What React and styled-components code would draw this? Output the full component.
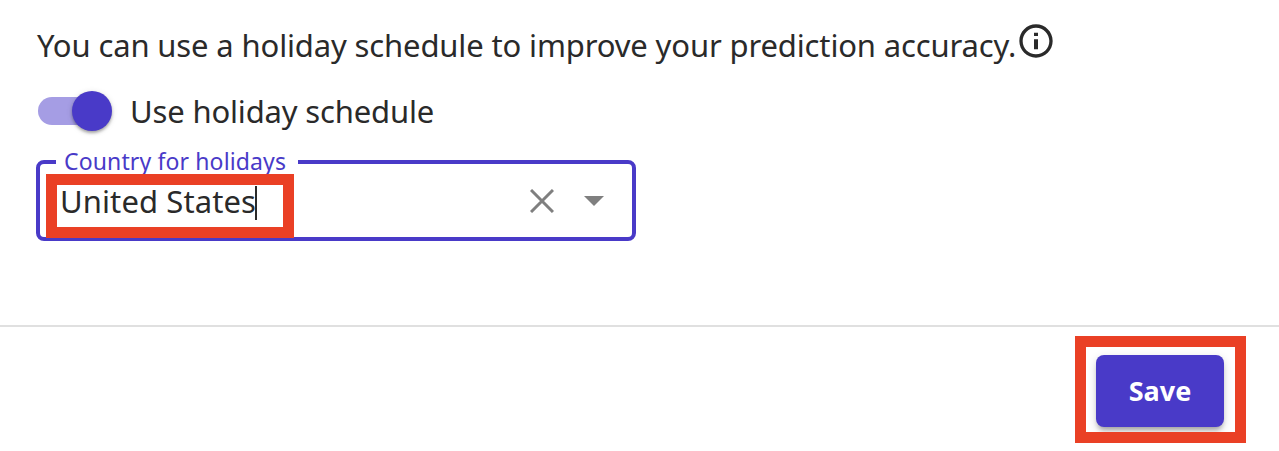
import React from "react";
import styled, { createGlobalStyle } from "styled-components";

const Global = createGlobalStyle`
  * { box-sizing: border-box; }
  body { margin: 0; background: #fff; color: #2a2a2a; font-family: "Noto Sans", "Open Sans", sans-serif; }
`;

const Page = styled.main`
  width: 1279px;
  height: 451px;
  display: flex;
  flex-direction: column;
  overflow: hidden;
`;

const Content = styled.section`
  height: 325px;
  padding: 19px 36px 0;
  display: flex;
  flex-direction: column;
  align-items: flex-start;
`;

const Line = styled.div`
  display: flex;
  align-items: center;
  height: ${(p) => p.$height}px;
  padding-top: ${(p) => p.$top || 0}px;
  gap: ${(p) => p.$gap || 0}px;
`;

const Text = styled.span`
  display: block;
  white-space: nowrap;
  font-size: 31px;
  line-height: 44px;
  margin-top: ${(p) => p.$shift || 0}px;
  padding-left: ${(p) => p.$indent || 0}px;
  width: ${(p) => p.$width}px;
  letter-spacing: ${(p) => p.$spacing || 0}px;
`;

const InfoIcon = styled.svg`
  display: block;
  width: 40px;
  height: 40px;
  margin: -8px 0 0;
  fill: #2a2a2a;
`;

const Track = styled.span`
  width: 68px;
  height: 28px;
  margin-left: 2px;
  border-radius: 14px;
  background: #a59de4;
  display: flex;
  align-items: center;
`;

const Thumb = styled.span`
  flex: none;
  width: 40px;
  height: 40px;
  margin-left: 34px;
  border-radius: 50%;
  background: #493ac8;
  box-shadow: 0 2px 3px rgba(0, 0, 0, 0.3), 0 1px 6px rgba(0, 0, 0, 0.12);
`;

const Field = styled.fieldset`
  position: relative;
  width: 600px;
  height: 96px;
  margin: 0;
  padding: 0 28px 0 20px;
  border: 4px solid #493ac8;
  border-radius: 8px;
`;

const Label = styled.legend`
  width: 242px;
  height: 34px;
  margin-left: -4px;
  padding: 0 0 0 8px;
  font-size: 23px;
  line-height: 32px;
  letter-spacing: ${(p) => p.$spacing}px;
  white-space: nowrap;
  color: #493ac8;
`;

const Control = styled.div`
  display: flex;
  align-items: center;
  height: 44px;
`;

const Caret = styled.i`
  width: 2px;
  height: 34px;
  margin-top: 3px;
  background: #2a2a2a;
`;

const Actions = styled.div`
  display: flex;
  align-items: center;
  gap: 30px;
  margin-left: auto;
  svg { display: block; }
`;

const Highlight = styled.span`
  position: absolute;
  inset: ${(p) => p.$inset};
  border: 11px solid #ea4025;
  pointer-events: none;
`;

const Footer = styled.footer`
  flex: 1;
  border-top: 2px solid #e0e0e0;
  padding: 28px 55px 0;
  display: flex;
  justify-content: flex-end;
  align-items: flex-start;
`;

const ButtonWrap = styled.div`
  position: relative;
`;

const Button = styled.button`
  display: block;
  width: 128px;
  height: 72px;
  padding: 0;
  border: 0;
  border-radius: 8px;
  background: #493ac8;
  color: #fff;
  font: 700 27px/72px "Noto Sans", "Open Sans", sans-serif;
  box-shadow: 0 5px 5px -2px rgba(0, 0, 0, 0.28), 0 3px 10px rgba(0, 0, 0, 0.16);
`;

export default function App() {
  return (
    <>
      <Global />
      <Page>
        <Content>
          <Line $height={52}>
            <Text $width={980} $indent={1} $spacing={-0.14}>You can use a holiday schedule to improve your prediction accuracy.</Text>
            <InfoIcon viewBox="0 0 24 24">
              <path d="M10.800 7h2.400v2h-2.400zm0 4h2.400v6h-2.400zM12 2C6.480 2 2 6.480 2 12s4.480 10 10 10 10-4.480 10-10S17.520 2 12 2zm0 18c-4.410 0-8-3.590-8-8s3.590-8 8-8 8 3.590 8 8-3.590 8-8 8z" />
            </InfoIcon>
          </Line>
          <Line $height={74} $top={6} $gap={24}>
            <Track><Thumb /></Track>
            <Text $spacing={-0.16}>Use holiday schedule</Text>
          </Line>
          <Field>
            <Label $spacing={0.13}>Country for holidays</Label>
            <Control>
              <Text $width={195} $shift={-1} $spacing={0.1}>United States</Text>
              <Caret />
              <Actions>
                <svg width="24" height="24" viewBox="0 0 24 24" fill="none" stroke="#7f7f7f" strokeWidth="3">
                  <path d="M1 1 23 23M23 1 1 23" />
                </svg>
                <svg width="20" height="10" viewBox="0 0 20 10" fill="#7f7f7f">
                  <path d="M0 0h20L10 10z" />
                </svg>
              </Actions>
            </Control>
            <Highlight $inset="-5px 338.500px -15px 5.500px" />
          </Field>
        </Content>
        <Footer>
          <ButtonWrap>
            <Button>Save</Button>
            <Highlight $inset="-19px -22px -16px -21px" />
          </ButtonWrap>
        </Footer>
      </Page>
    </>
  );
}
